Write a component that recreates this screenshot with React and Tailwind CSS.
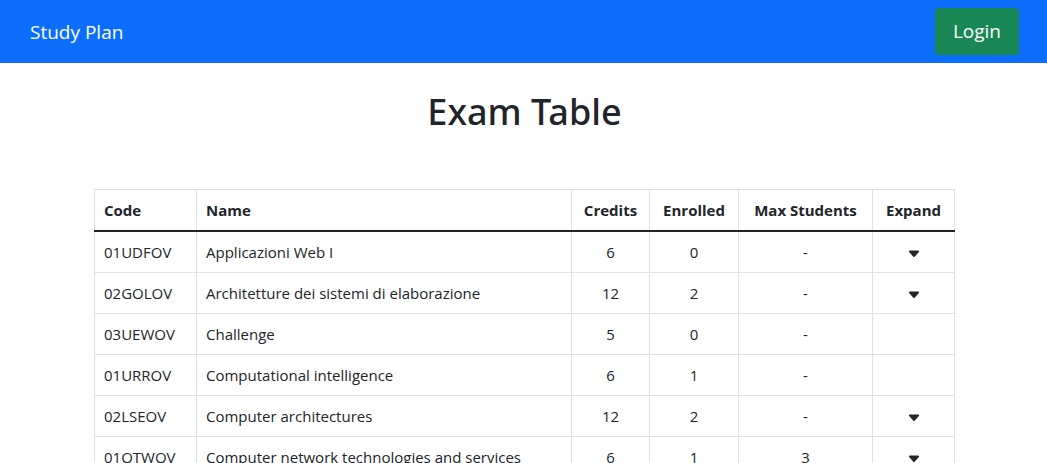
import { BsCaretDownFill } from "react-icons/bs";

const exams = [
  { code: "01UDFOV", name: "Applicazioni Web I", credits: 6, enrolled: 0, max: "-", expandable: true },
  { code: "02GOLOV", name: "Architetture dei sistemi di elaborazione", credits: 12, enrolled: 2, max: "-", expandable: true },
  { code: "03UEWOV", name: "Challenge", credits: 5, enrolled: 0, max: "-", expandable: false },
  { code: "01URROV", name: "Computational intelligence", credits: 6, enrolled: 1, max: "-", expandable: false },
  { code: "02LSEOV", name: "Computer architectures", credits: 12, enrolled: 2, max: "-", expandable: true },
  { code: "01OTWOV", name: "Computer network technologies and services", credits: 6, enrolled: 1, max: "3", expandable: true },
];

function Navbar() {
  return (
    <nav className="flex items-center justify-between bg-[#0d6efd] py-2 pr-7 pl-[30px] text-white">
      <a href="#" className="text-[19px] leading-8">
        Study Plan
      </a>
      <button type="button" className="rounded-sm bg-[#198754] px-[18px] py-2 text-[19px] leading-[31px]">
        Login
      </button>
    </nav>
  );
}

function ExamRow({ exam }) {
  return (
    <tr className="h-[41px] first:h-[42px]">
      <td className="border border-[#dee2e6] px-[9px]">{exam.code}</td>
      <td className="border border-[#dee2e6] px-[9px]">{exam.name}</td>
      <td className="border border-[#dee2e6] px-2 text-center">{exam.credits}</td>
      <td className="border border-[#dee2e6] px-2 text-center">{exam.enrolled}</td>
      <td className="border border-[#dee2e6] px-2 text-center">{exam.max}</td>
      <td className="border border-[#dee2e6] px-2 text-center">
        {exam.expandable && (
          <button type="button" aria-label={`Expand ${exam.name}`} className="block w-full pt-1">
            <BsCaretDownFill className="mx-auto size-3.5" />
          </button>
        )}
      </td>
    </tr>
  );
}

export default function App() {
  return (
    <div className="bg-white font-['Open_Sans',sans-serif] text-[#212529]">
      <Navbar />
      <main className="pt-[25px] pr-[92px] pl-[94px]">
        <h1 className="text-center font-['Noto_Sans',sans-serif] text-[36px] leading-12 font-medium">Exam Table</h1>
        <table className="mt-[53px] w-full table-fixed border-collapse text-[15px] leading-6">
          <colgroup>
            <col className="w-[102px]" />
            <col />
            <col className="w-[78px]" />
            <col className="w-[89px]" />
            <col className="w-[134px]" />
            <col className="w-[82px]" />
          </colgroup>
          <thead className="border-b-2 border-[#212529] font-bold">
            <tr className="h-[41px]">
              <th className="border-x border-t border-x-[#dee2e6] border-t-[#dee2e6] px-[9px] text-left">Code</th>
              <th className="border-x border-t border-x-[#dee2e6] border-t-[#dee2e6] px-[9px] text-left">Name</th>
              <th className="border-x border-t border-x-[#dee2e6] border-t-[#dee2e6] px-2">Credits</th>
              <th className="border-x border-t border-x-[#dee2e6] border-t-[#dee2e6] px-2">Enrolled</th>
              <th className="border-x border-t border-x-[#dee2e6] border-t-[#dee2e6] px-2">Max Students</th>
              <th className="border-x border-t border-x-[#dee2e6] border-t-[#dee2e6] px-2">Expand</th>
            </tr>
          </thead>
          <tbody>
            {exams.map((exam) => (
              <ExamRow key={exam.code} exam={exam} />
            ))}
          </tbody>
        </table>
      </main>
    </div>
  );
}
